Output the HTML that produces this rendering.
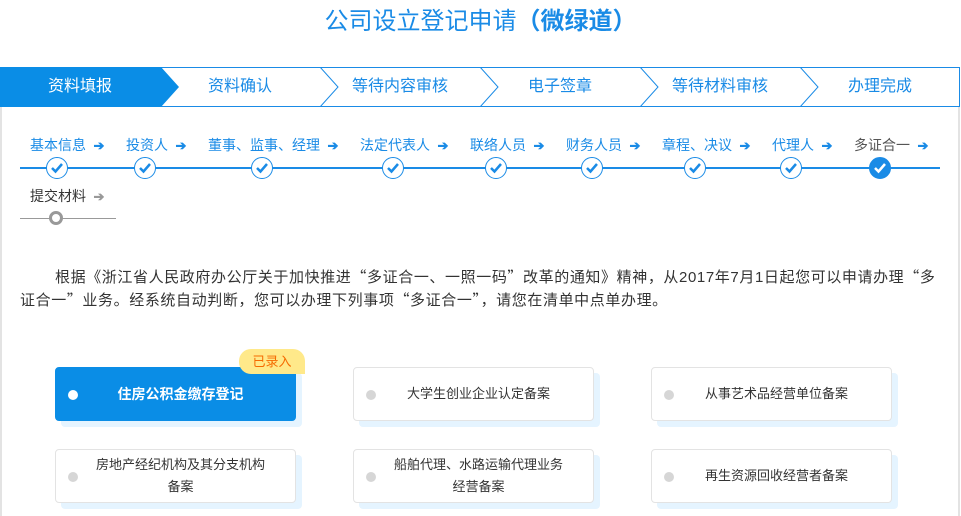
<!DOCTYPE html>
<html><head><meta charset="utf-8"><style>
*{margin:0;padding:0;box-sizing:border-box}
body{width:961px;height:507px;overflow:hidden;background:#fff;font-family:"Liberation Sans","Noto Sans CJK SC",sans-serif;position:relative}
.a{position:absolute;white-space:nowrap}
.title{left:0;width:961px;top:6px;text-align:center;font-size:24px;color:#1a8be6;line-height:32px}
.frame{position:absolute;left:0;top:106px;width:960px;height:410px;border-left:2px solid #e3e3e3;border-right:2px solid #e3e3e3}
.tab{top:67px;height:40px;line-height:40px;font-size:16px;color:#1a8be6;text-align:center;width:160px}
.lbl{top:136px;font-size:14px;color:#1a8be6;line-height:18px}
.arr{font-size:13px;color:#1a8be6;font-weight:bold}
.c{position:absolute;width:22px;height:22px;border:1.5px solid #1a8be6;border-radius:50%;background:#fff;top:157px}
.c svg{position:absolute;left:3px;top:4px}
.p{left:20px;width:925px;top:266px;font-size:15px;color:#333;line-height:22px;white-space:normal;text-indent:35px;letter-spacing:0.6px}
.q{font-family:"Noto Sans CJK SC",sans-serif}
.card{position:absolute;width:241px;height:54px;border:1px solid #e3e3e3;border-radius:4px;background:#fff;font-size:13px;color:#333;text-align:center;display:flex;align-items:center;justify-content:center;line-height:22px;padding:0 30px 0 40px;box-shadow:6px 6px 0 #e5f4ff}
.card i{position:absolute;left:12px;top:22px;width:10px;height:10px;border-radius:50%;background:#d6d6d6}
</style></head><body>
<div class="a title">公司设立登记申请<b>（微绿道）</b></div>
<div class="frame"></div>
<svg class="a" style="left:0;top:67px" width="961" height="40">
<rect x="0.5" y="0.5" width="959" height="39" fill="#fff" stroke="#1a8be6"/>
<polygon points="0,0 161,0 179,20 161,40 0,40" fill="#0a8de6"/>
<g fill="none" stroke="#1a8be6" stroke-width="1">
<polyline points="320,0 338,20 320,40"/><polyline points="480,0 498,20 480,40"/><polyline points="640,0 658,20 640,40"/><polyline points="800,0 818,20 800,40"/>
</g></svg>
<div class="a tab" style="left:0;color:#fff">资料填报</div>
<div class="a tab" style="left:160px">资料确认</div>
<div class="a tab" style="left:320px">等待内容审核</div>
<div class="a tab" style="left:480px">电子签章</div>
<div class="a tab" style="left:640px">等待材料审核</div>
<div class="a tab" style="left:800px">办理完成</div>

<div class="a" style="left:20px;top:167px;width:920px;height:1.5px;background:#1a8be6"></div>
<div class="a lbl" style="left:30px">基本信息 <span class="arr">&nbsp;➔</span></div>
<div class="a lbl" style="left:126px">投资人 <span class="arr">&nbsp;➔</span></div>
<div class="a lbl" style="left:208px">董事、监事、经理 <span class="arr">&nbsp;➔</span></div>
<div class="a lbl" style="left:360px">法定代表人 <span class="arr">&nbsp;➔</span></div>
<div class="a lbl" style="left:470px">联络人员 <span class="arr">&nbsp;➔</span></div>
<div class="a lbl" style="left:566px">财务人员 <span class="arr">&nbsp;➔</span></div>
<div class="a lbl" style="left:662px">章程、决议 <span class="arr">&nbsp;➔</span></div>
<div class="a lbl" style="left:772px">代理人 <span class="arr">&nbsp;➔</span></div>
<div class="a lbl" style="left:854px;color:#555">多证合一 <span class="arr">&nbsp;➔</span></div>
<div class="c" style="left:46px"><svg width="14" height="12"><path d="M2 6l3.5 3.5L12 2" fill="none" stroke="#1a8be6" stroke-width="2.5"/></svg></div>
<div class="c" style="left:134px"><svg width="14" height="12"><path d="M2 6l3.5 3.5L12 2" fill="none" stroke="#1a8be6" stroke-width="2.5"/></svg></div>
<div class="c" style="left:251px"><svg width="14" height="12"><path d="M2 6l3.5 3.5L12 2" fill="none" stroke="#1a8be6" stroke-width="2.5"/></svg></div>
<div class="c" style="left:382px"><svg width="14" height="12"><path d="M2 6l3.5 3.5L12 2" fill="none" stroke="#1a8be6" stroke-width="2.5"/></svg></div>
<div class="c" style="left:485px"><svg width="14" height="12"><path d="M2 6l3.5 3.5L12 2" fill="none" stroke="#1a8be6" stroke-width="2.5"/></svg></div>
<div class="c" style="left:581px"><svg width="14" height="12"><path d="M2 6l3.5 3.5L12 2" fill="none" stroke="#1a8be6" stroke-width="2.5"/></svg></div>
<div class="c" style="left:684px"><svg width="14" height="12"><path d="M2 6l3.5 3.5L12 2" fill="none" stroke="#1a8be6" stroke-width="2.5"/></svg></div>
<div class="c" style="left:780px"><svg width="14" height="12"><path d="M2 6l3.5 3.5L12 2" fill="none" stroke="#1a8be6" stroke-width="2.5"/></svg></div>
<div class="c" style="left:869px;background:#1a8be6"><svg width="14" height="12"><path d="M2 6l3.5 3.5L12 2" fill="none" stroke="#fff" stroke-width="2.5"/></svg></div>

<div class="a lbl" style="left:30px;top:187px;color:#333">提交材料 <span class="arr" style="color:#999">&nbsp;➔</span></div>
<div class="a" style="left:20px;top:218px;width:96px;height:1px;background:#999"></div>
<div class="a" style="left:49px;top:211px;width:14px;height:14px;border:3px solid #999;border-radius:50%;background:#fff"></div>

<div class="a p">根据《浙江省人民政府办公厅关于加快推进<span class="q">“</span>多证合一、一照一码<span class="q">”</span>改革的通知》精神，从2017年7月1日起您可以申请办理<span class="q">“</span>多证合一<span class="q">”</span>业务。经系统自动判断，您可以办理下列事项<span class="q">“</span>多证合一<span class="q">”</span>，请您在清单中点单办理。</div>

<div class="card" style="left:55px;top:367px;background:#0a8de6;border-color:#0a8de6;color:#fff;font-weight:bold;font-size:14px"><i style="background:#fff"></i>住房公积金缴存登记</div>
<div class="a" style="left:239px;top:349px;width:66px;height:25px;border-radius:12px 12px 0 12px;background:#ffe98a;color:#f56a00;font-size:13px;text-align:center;line-height:25px">已录入</div>
<div class="card" style="left:353px;top:367px"><i></i>大学生创业企业认定备案</div>
<div class="card" style="left:651px;top:367px"><i></i>从事艺术品经营单位备案</div>
<div class="card" style="left:55px;top:449px"><i></i>房地产经纪机构及其分支机构备案</div>
<div class="card" style="left:353px;top:449px"><i></i>船舶代理、水路运输代理业务经营备案</div>
<div class="card" style="left:651px;top:449px"><i></i>再生资源回收经营者备案</div>
</body></html>
